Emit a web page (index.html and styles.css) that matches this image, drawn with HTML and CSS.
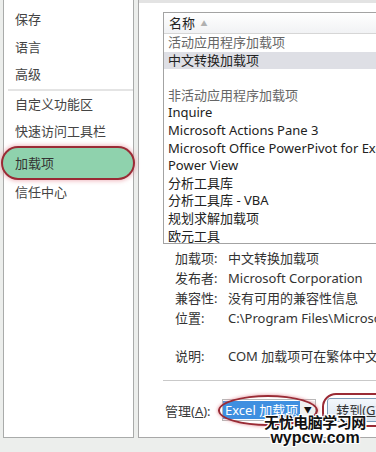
FILE: index.html
```html
<!DOCTYPE html>
<html lang="zh-CN">
<head>
  <meta charset="UTF-8" />
  <title>Excel 选项 - 加载项</title>
  <link rel="stylesheet" href="styles.css">
</head>
<body>
  <div class="window">
    <!-- Left navigation -->
    <ul class="nav">
      <li>保存</li>
      <li>语言</li>
      <li>高级</li>
      <li class="nav-sep"></li>
      <li>自定义功能区</li>
      <li>快速访问工具栏</li>
      <li class="active">加载项</li>
      <li>信任中心</li>
    </ul>

    <!-- Main area -->
    <div class="main">
      <div class="top-strip"></div>

      <div class="addin-list">
        <div class="list-head">名称 <span class="sort">▲</span></div>
        <div class="row group">活动应用程序加载项</div>
        <div class="row selected">中文转换加载项</div>
        <div class="row"></div>
        <div class="row group">非活动应用程序加载项</div>
        <div class="row">Inquire</div>
        <div class="row">Microsoft Actions Pane 3</div>
        <div class="row">Microsoft Office PowerPivot for Excel 2013</div>
        <div class="row">Power View</div>
        <div class="row">分析工具库</div>
        <div class="row">分析工具库 - VBA</div>
        <div class="row">规划求解加载项</div>
        <div class="row">欧元工具</div>
      </div>

      <div class="details">
        <div class="label">加载项:</div><div>中文转换加载项</div>
        <div class="label">发布者:</div><div>Microsoft Corporation</div>
        <div class="label">兼容性:</div><div>没有可用的兼容性信息</div>
        <div class="label">位置:</div><div>C:\Program Files\Microsoft Office\Office15\ADDINS</div>
        <div class="label desc">说明:</div><div class="desc">COM 加载项可在繁体中文和简体中文之间转换</div>
      </div>

      <div class="manage">
        <span class="manage-label">管理(<u>A</u>):</span>
        <div class="combo">
          <span class="combo-text">Excel 加载项</span>
          <span class="combo-arrow">▼</span>
        </div>
        <div class="go-btn">转到(<u>G</u>)...</div>
      </div>
    </div>
  </div>

  <div class="watermark">
    <div class="wm-cn">无忧电脑学习网</div>
    <div class="wm-en">wypcw.com</div>
  </div>
</body>
</html>
```

FILE: styles.css
```css
body {
  margin: 0;
  width: 376px;
  height: 452px;
  overflow: hidden;
  position: relative;
  background-color: #eceeec;
  font-family: "Noto Sans", "Noto Sans CJK SC", sans-serif;
  font-size: 13px;
  color: #3a3a3a;
}
.window {
  display: flex;
  gap: 4px;
  height: 438px;
  padding-left: 3px;
}
/* Left navigation */
.nav {
  list-style: none;
  margin: 0;
  width: 131px;
  box-sizing: border-box;
  padding: 6px 0 0 0;
  background: #fff;
  border: 1px solid #a9abaa;
  border-top: none;
}
.nav li {
  height: 27.5px;
  line-height: 27.5px;
  padding-left: 11px;
  color: #444;
}
.nav .nav-sep {
  height: 2px;
  margin: 0 0 0 4px;
  padding: 0;
  background: #e4e4e4;
}
.nav .active {
  position: relative;
  height: 30px;
  line-height: 30px;
  margin: 2px 0 1px -1px;
  padding-left: 12px;
  background: #8fd2ad;
  border-radius: 15px;
  color: #333;
  box-shadow: 0 0 0 2px #9a2b35, 0 0 4px 3px rgba(230, 140, 150, 0.6);
}
/* Main area */
.main {
  flex: 1;
  min-width: 0;
  overflow: hidden;
  background: #fff;
  border-left: 1px solid #a8a8a8;
  border-bottom: 1px solid #a8a8a8;
}
.top-strip {
  height: 3px;
  background: #e3e3e3;
}
.addin-list {
  width: 300px;
  margin: 9px 0 0 24px;
  border: 1px solid #a3a3a3;
  height: 230px;
  overflow: hidden;
  color: #222;
}
.list-head {
  height: 20px;
  line-height: 20px;
  padding-left: 5px;
  border-bottom: 1px solid #d6d6d6;
  background: linear-gradient(#ffffff, #f1f2f4);
}
.sort {
  font-size: 7px;
  color: #b0b0b0;
  vertical-align: 2px;
  margin-left: 2px;
}
.row {
  height: 17.6px;
  line-height: 17.6px;
  padding-left: 4px;
  white-space: nowrap;
}
.row.group {
  color: #666;
}
.row.selected {
  background: #dedfe5;
}
/* Details */
.details {
  display: grid;
  grid-template-columns: 53px auto;
  grid-auto-rows: 20px;
  line-height: 20px;
  margin: 4px 0 0 36px;
  white-space: nowrap;
  color: #333;
}
.details .desc {
  margin-top: 18px;
}
/* Manage row */
.manage {
  display: flex;
  align-items: center;
  margin: 32px 0 0 24px;
  padding-top: 17px;
  border-top: 1px solid #c9c9c9;
  width: 300px;
  white-space: nowrap;
}
.manage-label {
  margin-left: 2px;
  width: 56px;
}
.combo {
  position: relative;
  display: flex;
  align-items: center;
  height: 20px;
  margin-left: 1px;
  border: 1px solid #b8b8b8;
}
.combo::before {
  content: "";
  position: absolute;
  left: -5px;
  right: -3px;
  top: -5px;
  bottom: -6px;
  border: 2px solid #9a2b35;
  border-radius: 50%;
  box-shadow: 0 0 3px 1px rgba(230, 140, 150, 0.6);
}
.combo-text {
  background: #3f8fe0;
  color: #fff;
  padding: 0 2px;
  line-height: 18px;
}
.combo-arrow {
  width: 15px;
  text-align: center;
  font-size: 8px;
  color: #111;
  background: #f0f0f0;
  line-height: 18px;
}
.go-btn {
  position: relative;
  margin-left: 11px;
  height: 22px;
  line-height: 22px;
  padding: 0 8px;
  border: 1px solid #7f9db9;
  border-radius: 3px;
  background: linear-gradient(#f4f8fc, #dbe6f2);
  color: #333;
}
.go-btn::before {
  content: "";
  position: absolute;
  left: -6px;
  right: -6px;
  top: -6px;
  bottom: -6px;
  border: 2px solid #9a2b35;
  border-radius: 14px;
}
/* Watermark */
.watermark {
  position: absolute;
  left: 263px;
  top: 415px;
  width: 104px;
  text-align: center;
  font-weight: bold;
  color: #111;
  line-height: 1;
  text-shadow: 1px 0 #fff, -1px 0 #fff, 0 1px #fff, 0 -1px #fff,
    1px 1px #fff, -1px -1px #fff, 1px -1px #fff, -1px 1px #fff;
}
.wm-cn {
  font-size: 15px;
  letter-spacing: -0.5px;
}
.wm-en {
  font-family: "Liberation Sans", sans-serif;
  font-size: 16px;
  margin-top: 0;
}
```
